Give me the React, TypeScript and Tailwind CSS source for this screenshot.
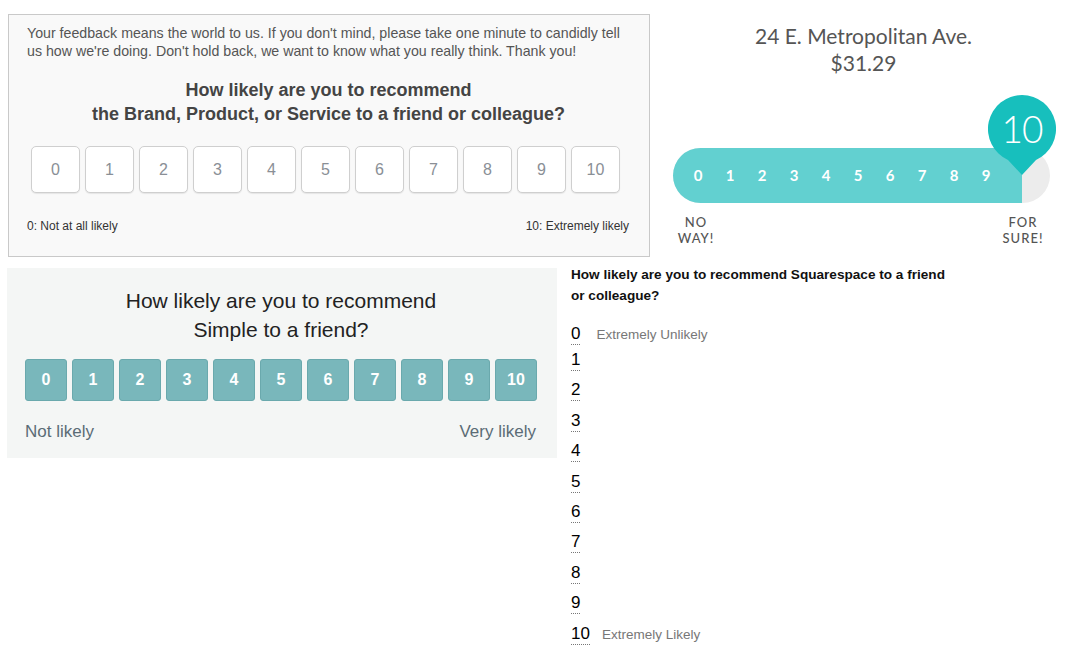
import React from "react";

const nums = [0, 1, 2, 3, 4, 5, 6, 7, 8, 9, 10];

function Panel1() {
  return (
    <div className="mt-[14px] ml-[8px] w-[642px] h-[243px] border border-[#c9c9c9] bg-[#f9f9f9] font-['Liberation_Sans',Arial,sans-serif]">
      <p className="pl-[18px] pt-[9px] pr-[4px] text-[14.2px] leading-[18px] text-[#555]">
        Your feedback means the world to us. If you don't mind, please take one minute to candidly tell
        <br />
        us how we're doing. Don't hold back, we want to know what you really think. Thank you!
      </p>
      <h2 className="mt-[18px] text-center text-[18px] leading-[24px] font-bold text-[#444] pr-[1px]">
        How likely are you to recommend
        <br />
        the Brand, Product, or Service to a friend or colleague?
      </h2>
      <div className="mt-[20px] ml-[22px] flex gap-[5px]">
        {nums.map((n) => (
          <div
            key={n}
            className="w-[49px] h-[47px] rounded-[5px] border border-[#cfcfcf] bg-white shadow-[0_1px_1px_rgba(0,0,0,0.08)] flex items-center justify-center text-[16px] text-[#8a8f96]"
          >
            {n}
          </div>
        ))}
      </div>
      <div className="mt-[25px] pl-[18px] pr-[20px] flex justify-between text-[12px] leading-[16px] text-[#333]">
        <span>0: Not at all likely</span>
        <span>10: Extremely likely</span>
      </div>
    </div>
  );
}

function Panel2() {
  return (
    <div className="ml-[10px] flex-1 flex flex-col font-['Lato',sans-serif]">
      <div className="mt-[22px] text-center text-[21px] leading-[27px] text-[#555]">
        <div>24 E. Metropolitan Ave.</div>
        <div>$31.29</div>
      </div>
      <div className="relative mt-[72px] ml-[13px] w-[377px] h-[55px] rounded-full bg-[#ececec]">
        <div className="h-full w-[349px] rounded-l-full bg-[#62d0d0] flex items-center pl-[9px]">
          {nums.slice(0, 10).map((n) => (
            <div key={n} className="w-[32px] text-center text-[15px] font-bold text-white">
              {n}
            </div>
          ))}
        </div>
        <div className="absolute left-[315px] top-[-53px] w-[68px] h-[80px]">
          <svg width="68" height="80" viewBox="0 0 68 80">
            <path d="M34 0 A34 34 0 0 1 48 65 L34 80 L20 65 A34 34 0 0 1 34 0 Z" fill="#17bfbd" />
          </svg>
          <div className="absolute left-0 top-0 w-[68px] h-[68px] flex items-center justify-center text-[37px] font-light text-white tracking-[-1px]">
            10
          </div>
        </div>
      </div>
      <div className="mt-[11px] ml-[13px] w-[377px] flex justify-between text-[13px] leading-[16px] text-[#555] tracking-[1px] font-medium">
        <div className="w-[46px] text-center">
          NO
          <br />
          WAY!
        </div>
        <div className="w-[56px] text-center mr-[-1px]">
          FOR
          <br />
          SURE!
        </div>
      </div>
    </div>
  );
}

function Panel3() {
  return (
    <div className="mt-[6px] ml-[7px] w-[550px] h-[190px] bg-[#f4f6f5] font-['Liberation_Sans',Arial,sans-serif]">
      <h2 className="pt-[18px] text-center text-[21px] leading-[29px] text-[#222] pr-[2px]">
        How likely are you to recommend
        <br />
        Simple to a friend?
      </h2>
      <div className="mt-[15px] ml-[18px] flex gap-[5px]">
        {nums.map((n) => (
          <div
            key={n}
            className="w-[42px] h-[42px] rounded-[3px] bg-[#79b7bb] border border-[#6aa9ad] flex items-center justify-center text-[16px] font-bold text-white"
          >
            {n}
          </div>
        ))}
      </div>
      <div className="mt-[20px] pl-[18px] pr-[21px] flex justify-between text-[17px] leading-[22px] text-[#5b6c76]">
        <span>Not likely</span>
        <span>Very likely</span>
      </div>
    </div>
  );
}

function Panel4() {
  return (
    <div className="ml-[14px] font-['Liberation_Sans',Arial,sans-serif]">
      <h3 className="mt-[2px] w-[385px] text-[13.6px] leading-[21px] font-bold text-[#111]">
        How likely are you to recommend Squarespace to a friend or colleague?
      </h3>
      <div className="mt-[18px] flex flex-col">
        {nums.map((n) => (
          <div key={n} className={(n === 0 ? "h-[26px]" : "h-[30.4px]") + " flex items-start"}>
            <span className="text-[17px] leading-[19px] text-black border-b border-dotted border-[#777] pb-[1px]">
              {n}
            </span>
            {n === 0 && (
              <span className="ml-[16px] mt-[2px] text-[13.5px] leading-[17px] text-[#777]">Extremely Unlikely</span>
            )}
            {n === 10 && (
              <span className="ml-[12px] mt-[2px] text-[13.5px] leading-[17px] text-[#777]">Extremely Likely</span>
            )}
          </div>
        ))}
      </div>
    </div>
  );
}

export default function App() {
  return (
    <div className="w-[1067px] h-[664px] bg-white overflow-hidden">
      <div className="flex h-[262px]">
        <Panel1 />
        <Panel2 />
      </div>
      <div className="flex">
        <Panel3 />
        <Panel4 />
      </div>
    </div>
  );
}
